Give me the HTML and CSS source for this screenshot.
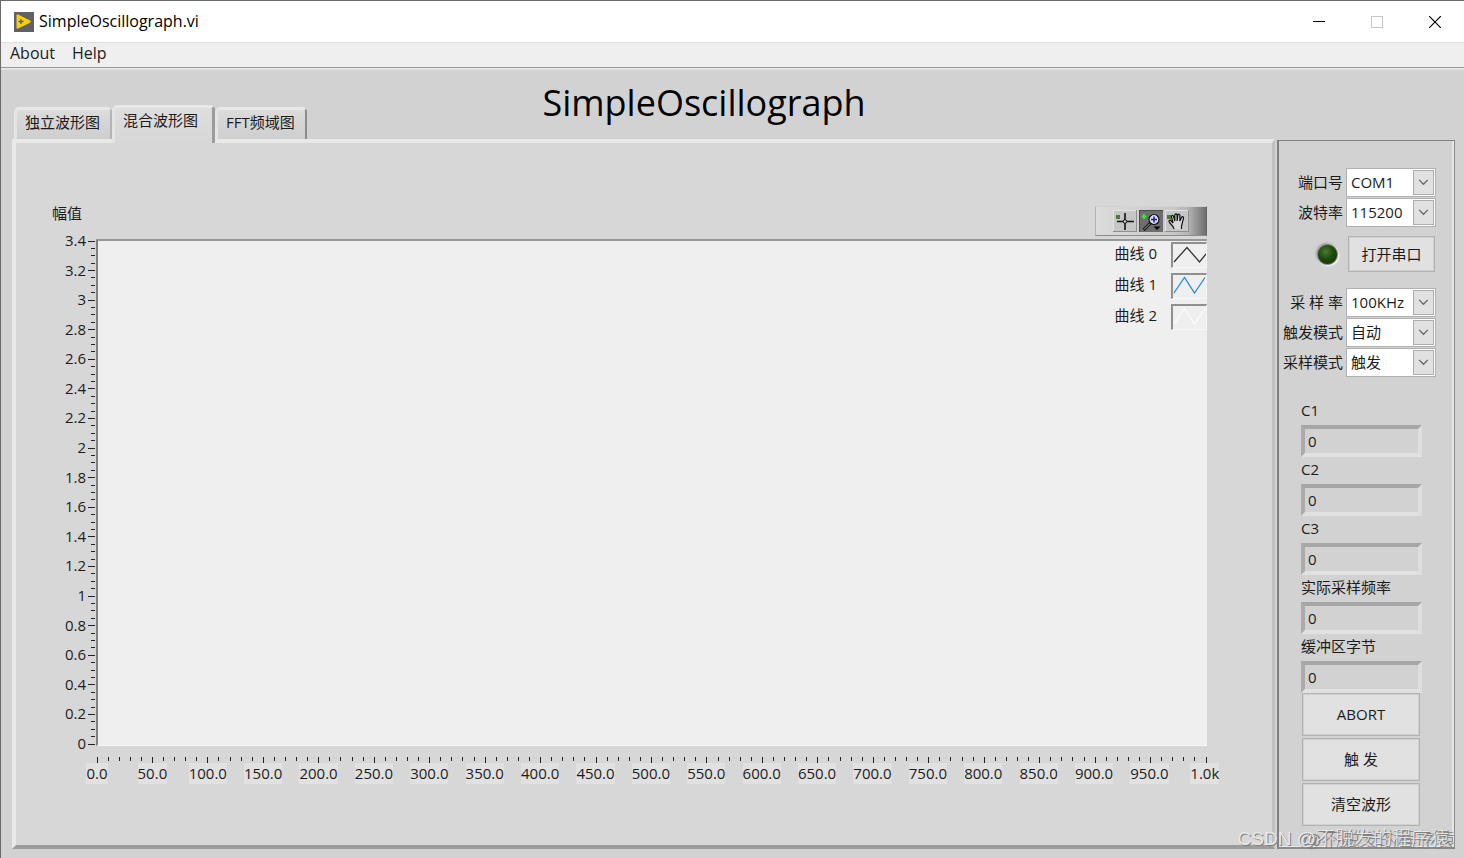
FILE: index.html
```html
<!DOCTYPE html>
<html lang="zh-CN">
<head>
<meta charset="utf-8">
<title>SimpleOscillograph.vi</title>
<link rel="stylesheet" href="styles.css">
</head>
<body>
<div class="window">
  <header class="titlebar">
    <svg class="app-icon" width="20" height="20" viewBox="0 0 20 20" aria-hidden="true">
      <rect width="20" height="20" fill="#5f6068"/>
      <path d="M2.500 3.200Q2.500 2 4 2.600L16 8.600Q17.600 9.600 16 10.800L4 16.600Q2.500 17 2.500 15.800Z" fill="#fdd000"/>
      <path d="M4.500 9.500h5M7 7v5" stroke="#5f6068" stroke-width="1.400"/>
    </svg>
    <span class="window-title">SimpleOscillograph.vi</span>
    <button class="win-btn" aria-label="Minimize"><svg width="12" height="12"><path d="M0 5.500H12" stroke="#000"/></svg></button>
    <button class="win-btn" aria-label="Maximize" disabled><svg width="12" height="12"><rect x=".5" y=".5" width="11" height="11" fill="none" stroke="#c8c8c8"/></svg></button>
    <button class="win-btn" aria-label="Close"><svg width="12" height="12"><path d="M0 0L12 12M12 0L0 12" stroke="#000" stroke-width="1.200"/></svg></button>
  </header>
  <nav class="menubar">
    <button class="menu">About</button>
    <button class="menu">Help</button>
  </nav>

  <div class="workspace">
    <div class="top">
      <div class="tabs" role="tablist">
        <button class="tab" role="tab">独立波形图</button>
        <button class="tab tab-active" role="tab" aria-selected="true">混合波形图</button>
        <button class="tab" role="tab">FFT频域图</button>
      </div>
      <h1 class="heading">SimpleOscillograph</h1>
    </div>

    <div class="panels">
      <main class="scope">
        <div class="scope-head">
          <span class="axis-title">幅值</span>
          <div class="palette">
            <button class="tool" aria-label="Cursor"><svg width="24" height="21" viewBox="0 0 24 21"><rect x="3" y="4" width="4" height="4" fill="#4c7a42"/><path d="M4 10.500H21M12 2V19" stroke="#111" stroke-width="1.600"/><circle cx="12" cy="10.500" r="1.800" fill="#ccc" stroke="#111"/></svg></button>
            <button class="tool tool-on" aria-label="Zoom"><svg width="24" height="21" viewBox="0 0 24 21"><path d="M5 3v5M2.500 5.500h5" stroke="#3fe030" stroke-width="2"/><path d="M11.500 12L4.500 19" stroke="#111" stroke-width="3"/><path d="M11 12.500L5 18.500" stroke="#bbb" stroke-width="1"/><circle cx="15" cy="8.500" r="5" fill="#dcdcff" stroke="#111" stroke-width="1.200"/><path d="M15 5.500v6M12 8.500h6" stroke="#202070" stroke-width="1.500"/><path d="M14.500 15.500h7L18 19z" fill="#000"/></svg></button>
            <button class="tool" aria-label="Pan"><svg width="24" height="21" viewBox="0 0 24 21"><rect x="2" y="4" width="4" height="4" fill="#4c7a42"/><path d="M9 18L8 15.500 4.500 11.500C3 9.500 5 8.500 6.200 10L8 12 6.500 6C6.200 4 8.200 4 8.600 5.500L9.800 10V4.200C9.900 2.500 12 2.500 12.100 4.200V10L12.800 4.200C13.100 2.700 15 3 14.900 4.600L14.800 10 16.500 6.500C17.300 5 19 5.700 18.500 7.300L16.500 15V18" fill="#d8d8d8" stroke="#111" stroke-width="1.200"/></svg></button>
          </div>
        </div>
        <div class="chart">
          <ol class="y-labels">
            <li>3.4</li><li>3.2</li><li>3</li><li>2.8</li><li>2.6</li><li>2.4</li><li>2.2</li><li>2</li><li>1.8</li><li>1.6</li><li>1.4</li><li>1.2</li><li>1</li><li>0.8</li><li>0.6</li><li>0.4</li><li>0.2</li><li>0</li>
          </ol>
          <svg class="y-ticks" aria-hidden="true"></svg>
          <div class="plot">
            <ul class="legend">
              <li>曲线 0<svg class="swatch" viewBox="0 0 33 23"><path d="M1 18L14 3.500 26.500 18 33 10" stroke="#333"/></svg></li>
              <li>曲线 1<svg class="swatch" viewBox="0 0 33 23"><path d="M1 18L11.500 2.500 21.500 18 32 2.500" stroke="#2b8be0"/></svg></li>
              <li>曲线 2<svg class="swatch" viewBox="0 0 33 23"><path d="M1 18L11.500 2.500 21.500 18 32 2.500" stroke="#fdfdfd"/></svg></li>
            </ul>
          </div>
          <svg class="x-ticks" aria-hidden="true"></svg>
          <ol class="x-labels">
            <li><span>0.0</span></li><li><span>50.0</span></li><li><span>100.0</span></li><li><span>150.0</span></li><li><span>200.0</span></li><li><span>250.0</span></li><li><span>300.0</span></li><li><span>350.0</span></li><li><span>400.0</span></li><li><span>450.0</span></li><li><span>500.0</span></li><li><span>550.0</span></li><li><span>600.0</span></li><li><span>650.0</span></li><li><span>700.0</span></li><li><span>750.0</span></li><li><span>800.0</span></li><li><span>850.0</span></li><li><span>900.0</span></li><li><span>950.0</span></li><li><span>1.0k</span></li>
          </ol>
        </div>
      </main>

      <aside class="side">
        <div class="settings">
          <div class="setting"><label for="port">端口号</label><span class="combo"><select id="port"><option>COM1</option></select><svg class="arrow" viewBox="0 0 22 26"><path d="M6 10L11 15 16 10"/></svg></span></div>
          <div class="setting"><label for="baud">波特率</label><span class="combo"><select id="baud"><option>115200</option></select><svg class="arrow" viewBox="0 0 22 26"><path d="M6 10L11 15 16 10"/></svg></span></div>
        </div>
        <div class="connect">
          <span class="led" role="img" aria-label="串口状态"></span>
          <button class="btn btn-open">打开串口</button>
        </div>
        <div class="settings">
          <div class="setting"><label for="rate">采 样 率</label><span class="combo"><select id="rate"><option>100KHz</option></select><svg class="arrow" viewBox="0 0 22 26"><path d="M6 10L11 15 16 10"/></svg></span></div>
          <div class="setting"><label for="trig">触发模式</label><span class="combo"><select id="trig"><option>自动</option></select><svg class="arrow" viewBox="0 0 22 26"><path d="M6 10L11 15 16 10"/></svg></span></div>
          <div class="setting"><label for="mode">采样模式</label><span class="combo"><select id="mode"><option>触发</option></select><svg class="arrow" viewBox="0 0 22 26"><path d="M6 10L11 15 16 10"/></svg></span></div>
        </div>
        <div class="readouts">
          <label for="c1">C1</label><input id="c1" value="0" readonly>
          <label for="c2">C2</label><input id="c2" value="0" readonly>
          <label for="c3">C3</label><input id="c3" value="0" readonly>
          <label for="freq">实际采样频率</label><input id="freq" value="0" readonly>
          <label for="buf">缓冲区字节</label><input id="buf" value="0" readonly>
        </div>
        <div class="actions">
          <button class="btn">ABORT</button>
          <button class="btn">触 发</button>
          <button class="btn">清空波形</button>
        </div>
      </aside>
    </div>
  </div>
  <div class="watermark">CSDN <span class="author">@不脱发的程序猿</span></div>
</div>
<script src="ticks.js"></script>
</body>
</html>
```
FILE: styles.css
```css
* { box-sizing: border-box; }

body {
  margin: 0;
  font-family: "Open Sans", "Noto Sans CJK SC", sans-serif;
  font-size: 15px;
  line-height: 20px;
  color: #1c1c1c;
}

button, select, input {
  margin: 0;
  padding: 0;
  border: 0;
  background: none;
  font: inherit;
  color: inherit;
}

ol, ul { margin: 0; padding: 0; list-style: none; }

.window {
  position: relative;
  display: flex;
  flex-direction: column;
  min-height: 100vh;
  border-top: 1px solid #6b6b6b;
  border-left: 1px solid #6b6b6b;
  background: #d2d2d2;
}

/* Title bar and menu */
.titlebar {
  display: flex;
  align-items: center;
  height: 42px;
  padding-left: 13px;
  border-bottom: 1px solid #dedede;
  background: #fff;
  font-size: 16px;
  color: #000;
}
.window-title { flex: 1; margin-left: 5px; padding-bottom: 1px; }
.win-btn {
  display: flex;
  align-items: center;
  justify-content: center;
  width: 58px;
  height: 40px;
}
.menubar {
  display: flex;
  gap: 17px;
  height: 25px;
  padding: 0 9px 5px;
  border-bottom: 1px solid #9a9a9a;
  background: #efefef;
  font-size: 16px;
}

/* Tabs and heading */
.workspace {
  flex: 1;
  display: flex;
  flex-direction: column;
  padding: 0 9px 9px 11px;
  border-top: 2px solid #e6e6e6;
}
.top {
  display: grid;
  grid-template-columns: 9fr auto 10fr;
  height: 69px;
}
.tabs { display: flex; align-items: flex-end; padding-left: 2px; }
.tab {
  height: 32px;
  padding: 0 10px 5px 8px;
  border: solid;
  border-width: 3px 2px 0 3px;
  border-color: #e8e8e8 #b4b4b4 #ccc #e4e4e4;
  border-radius: 5px 5px 0 0;
  background: linear-gradient(#dcdcdc, #cecece);
  white-space: nowrap;
}
.tab:last-child { border-right-color: #8c8c8c; }
.tab-active {
  position: relative;
  z-index: 1;
  height: 38px;
  margin-bottom: -4px;
  padding: 0 14px 12px 8px;
  border-right: 3px solid #9c9c9c;
  background: linear-gradient(#dedede, #d7d7d7);
}
.heading {
  margin: 0;
  padding-top: 6px;
  font-size: 36px;
  line-height: 54px;
  font-weight: 400;
  color: #000;
}

/* Panels */
.panels { flex: 1; display: flex; gap: 2px; }
.scope {
  flex: 1;
  display: flex;
  flex-direction: column;
  padding: 63px 65px 61px 36px;
  border: 4px solid;
  border-width: 4px 3px 4px 4px;
  border-color: #e9e9e9 #c0c0c0 #9c9c9c #e9e9e9;
  background: #d7d7d7;
}
.scope-head {
  display: flex;
  justify-content: space-between;
  align-items: flex-start;
  height: 33px;
}
.axis-title { line-height: 14px; }
.palette {
  display: flex;
  gap: 2px;
  width: 112px;
  height: 30px;
  padding: 3px 0 3px 17px;
  border: 1px solid;
  border-color: #d2d2d2 #666 #8c8c8c #b4b4b4;
  background: linear-gradient(90deg, #dcdcdc, #c8c8c8 70%, #b4b4b4 84%, #6e6e6e);
}
.tool {
  width: 24px;
  height: 22px;
  background: #c6c6c6;
  box-shadow: inset -1px -1px #8e8e8e, inset 1px 1px #e2e2e2;
}
.tool svg { display: block; }
.tool-on { background: #6e6e6e; box-shadow: inset 1px 1px #4a4a4a; }

/* Chart */
.chart {
  flex: 1;
  display: grid;
  grid-template: 1fr 17px 21px / 36px 8px 1fr;
}
.y-labels {
  display: flex;
  flex-direction: column;
  justify-content: space-between;
  margin: -9px 0 -7px;
  padding-right: 2px;
  text-align: right;
}
.y-ticks, .x-ticks {
  display: block;
  overflow: visible;
  stroke: #222;
  shape-rendering: crispEdges;
}
.y-ticks { width: 8px; height: calc(100% - 4px); margin: 2px 0; }
.plot {
  display: flex;
  justify-content: flex-end;
  align-items: flex-start;
  border: solid;
  border-width: 2px 0 1px 2px;
  border-color: #989898 #f8f8f8 #f8f8f8 #808080;
  background: #efefef;
}
.x-ticks {
  grid-column: 3;
  width: calc(100% - 2px);
  height: 6px;
  margin: 11px 1px 0;
}
.x-labels {
  grid-column: 3;
  display: flex;
  justify-content: space-between;
  margin: 0 -18px 0 -19px;
}
.x-labels li { display: flex; justify-content: center; width: 40px; }
.x-labels span { background: #e1e1e1; }
.legend { display: flex; flex-direction: column; gap: 5px; padding-top: 1px; }
.legend li { display: flex; gap: 14px; line-height: 22px; }
.swatch {
  width: 36px;
  height: 26px;
  border: solid;
  border-width: 2px 1px 1px 2px;
  border-color: #909090 #f8f8f8 #f8f8f8 #909090;
  fill: none;
  stroke-width: 1.3;
}

/* Side panel */
.side {
  display: flex;
  flex-direction: column;
  width: 178px;
  margin-top: 1px;
  padding: 26px 18px 0 2px;
  border: solid;
  border-color: #808080 #8c8c8c #8c8c8c #808080;
  border-width: 1px 1px 2px 2px;
  box-shadow: inset -2px -1px #e6e6e6;
}
.setting {
  display: flex;
  align-items: center;
  justify-content: flex-end;
  gap: 3px;
  height: 30px;
}
.setting label { white-space: pre; }
.combo { position: relative; width: 90px; height: 29px; }
.combo select {
  appearance: none;
  width: 100%;
  height: 100%;
  padding: 0 24px 1px 4px;
  border: 1px solid #aeb0b4;
  background: #fff;
}
.arrow {
  position: absolute;
  top: 2px;
  right: 2px;
  width: 21px;
  height: 25px;
  border: 1px solid #adadad;
  background: #e1e1e1;
  fill: none;
  stroke: #666;
  stroke-width: 1.5;
  pointer-events: none;
}
.connect {
  display: flex;
  align-items: center;
  justify-content: flex-end;
  gap: 10px;
  margin: 9px 1px 15px 0;
}
.led {
  width: 21px;
  height: 21px;
  border-radius: 50%;
  border: 1px solid #777;
  background: radial-gradient(circle at 40% 35%, #4a7a30, #1e4a0c 45%, #0e2c06);
  box-shadow: 1px 1px 2px #fff, -1px -1px 2px #999;
}
.btn {
  height: 43px;
  padding-bottom: 1px;
  border: 1px solid #b2b2b2;
  background: #e1e1e1;
  box-shadow: inset 0 0 0 1px #d0d0d0;
}
.btn-open { width: 87px; height: 36px; }
.readouts {
  display: flex;
  flex-direction: column;
  margin: 21px 14px 0 20px;
}
.readouts label { height: 27px; padding-top: 2px; }
.readouts input {
  width: 100%;
  height: 32px;
  padding: 0 0 1px 3px;
  border: 4px solid;
  border-color: #a6a6a6 #dedede #e1e1e1 #ababab;
  background: #d2d2d2;
}
.actions {
  display: flex;
  flex-direction: column;
  gap: 2px;
  margin: 0 16px 0 21px;
}

/* Overlaid signature */
.watermark {
  position: absolute;
  right: 15px;
  bottom: 6px;
  font-family: "Liberation Sans", "Noto Sans CJK SC", sans-serif;
  font-size: 19px;
  line-height: 26px;
  font-weight: 300;
  white-space: nowrap;
  color: #e8e8e8;
  text-shadow: 1px 1px #808080;
}
.author { text-shadow: 1px 1px #808080, 6px 2px #808080; }
```
FILE: ticks.js
```js
// Draws an evenly spaced ruler; every nth tick is a long one.
function drawTicks(selector, count, every, vertical) {
  const svg = document.querySelector(selector);
  for (let i = 0; i <= count; i++) {
    const line = document.createElementNS("http://www.w3.org/2000/svg", "line");
    const at = (100 * i) / count + "%";
    const major = i % every === 0;
    const ends = vertical ? [major ? 0 : 3, 7] : [0, major ? 6 : 4];
    const [along, across] = vertical ? ["y", "x"] : ["x", "y"];
    line.setAttribute(along + "1", at);
    line.setAttribute(along + "2", at);
    line.setAttribute(across + "1", ends[0]);
    line.setAttribute(across + "2", ends[1]);
    svg.append(line);
  }
}

drawTicks(".y-ticks", 68, 4, true);
drawTicks(".x-ticks", 100, 5, false);
```
